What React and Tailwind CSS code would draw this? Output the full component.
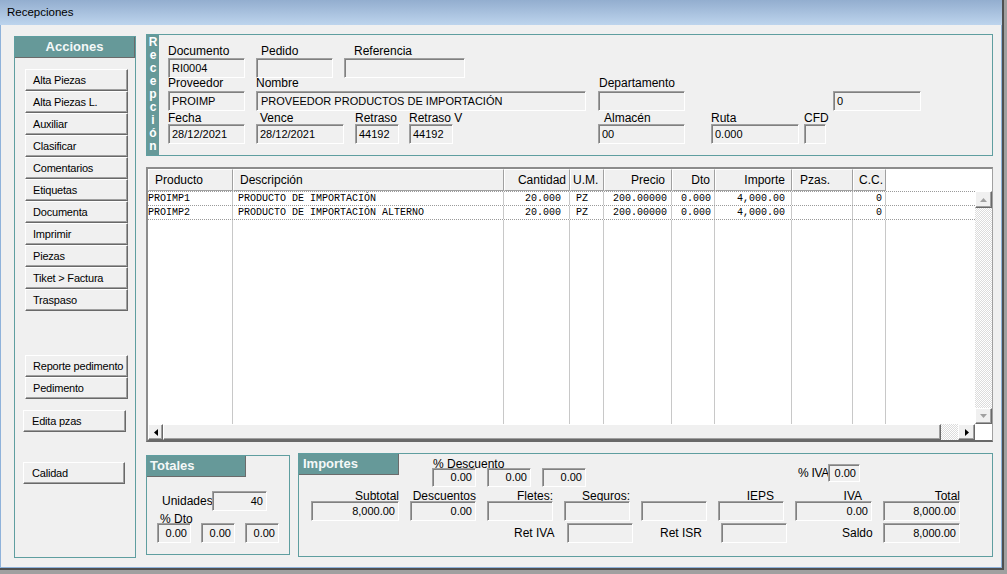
import React from "react";

const sunk =
  "border-t border-l border-t-[#a0a0a0] border-l-[#a0a0a0] border-r border-b border-r-white border-b-white shadow-[inset_1px_1px_0_#808080] bg-[#f0f0f0]";
const raised =
  "bg-[#f0f0f0] border-t border-l border-t-white border-l-white border-r border-b border-r-[#696969] border-b-[#696969] shadow-[inset_-1px_-1px_0_#a0a0a0]";
const checker =
  "bg-[repeating-conic-gradient(#ffffff_0_25%,#dcdcdc_0_50%)] bg-[length:2px_2px]";

function Box({ className = "", right = false, children }) {
  return (
    <div
      className={`${sunk} flex items-center text-[11px] whitespace-nowrap overflow-hidden ${
        right ? "justify-end pr-[3px]" : "pl-[3px]"
      } ${className}`}
    >
      {children}
    </div>
  );
}

function TealHeader({ className = "", children }) {
  return (
    <div
      className={`bg-[#669999] border-r border-b border-[#6b6b6b] text-[#f4f8f8] font-bold text-[13px] flex items-center shrink-0 ${className}`}
    >
      {children}
    </div>
  );
}

function Btn({ className = "", children }) {
  return (
    <div
      className={`${raised} flex items-center h-[22px] text-[11px] tracking-[-0.2px] whitespace-nowrap ${className}`}
    >
      {children}
    </div>
  );
}

const cols = [
  { w: "w-[85px]", h: "Producto", ha: "pl-[6px]", da: "pl-0" },
  { w: "w-[271px]", h: "Descripción", ha: "pl-[6px]", da: "pl-[5px]" },
  { w: "w-[66px]", h: "Cantidad", ha: "justify-end pr-[3px]", da: "justify-end pr-[8px]" },
  { w: "w-[34px]", h: "U.M.", ha: "pl-[2px]", da: "pl-[6px]" },
  { w: "w-[68px]", h: "Precio", ha: "justify-end pr-[6px]", da: "justify-end pr-[4px]" },
  { w: "w-[43px]", h: "Dto", ha: "justify-end pr-[4px]", da: "justify-end pr-[3px]" },
  { w: "w-[77px]", h: "Importe", ha: "justify-end pr-[6px]", da: "justify-end pr-[6px]" },
  { w: "w-[61px]", h: "Pzas.", ha: "pl-[7px]", da: "pl-[2px]" },
  { w: "w-[33px]", h: "C.C.", ha: "justify-end pr-[2px]", da: "justify-end pr-[3px]" },
];

const rows = [
  ["PROIMP1", "PRODUCTO DE IMPORTACIÓN", "20.000", "PZ", "200.00000", "0.000", "4,000.00", "", "0"],
  ["PROIMP2", "PRODUCTO DE IMPORTACIÓN ALTERNO", "20.000", "PZ", "200.00000", "0.000", "4,000.00", "", "0"],
];

const acciones = [
  "Alta Piezas",
  "Alta Piezas L.",
  "Auxiliar",
  "Clasificar",
  "Comentarios",
  "Etiquetas",
  "Documenta",
  "Imprimir",
  "Piezas",
  "Tiket > Factura",
  "Traspaso",
];

function LeftPanel() {
  return (
    <div className="mt-[2px] w-[122px] h-[522px] border border-[#5f9ea0] flex flex-col shrink-0">
      <TealHeader className="h-[21px] justify-center">Acciones</TealHeader>
      <div className="ml-[10px] mt-[11px] w-[103px] flex flex-col">
        {acciones.map((a) => (
          <Btn key={a} className="pl-[7px]">
            {a}
          </Btn>
        ))}
      </div>
      <div className="ml-[10px] mt-[44px] w-[103px] flex flex-col">
        <Btn className="pl-[7px]">Reporte pedimento</Btn>
        <Btn className="pl-[7px]">Pedimento</Btn>
      </div>
      <div className="ml-[8px] mt-[11px] w-[103px]">
        <Btn className="pl-[8px]">Edita pzas</Btn>
      </div>
      <div className="ml-[8px] mt-[30px] w-[102px]">
        <Btn className="pl-[8px]">Calidad</Btn>
      </div>
    </div>
  );
}

function HeaderPanel() {
  const letters = ["R", "e", "c", "e", "p", "c", "i", "ó", "n"];
  const lA = "h-[16px] leading-[18px] text-[12px] whitespace-nowrap";
  const lB = "h-[13px] leading-[11px] text-[12px] whitespace-nowrap";
  const lC = "h-[13px] leading-[15px] text-[12px] whitespace-nowrap";
  return (
    <div className="h-[122px] border border-[#5f9ea0] flex">
      <div className="w-[12px] bg-[#669999] flex flex-col items-center pt-[1px] text-white font-bold text-[12px] leading-[13px]">
        {letters.map((l, i) => (
          <span key={i}>{l}</span>
        ))}
      </div>
      <div className="flex flex-col pl-[9px] pt-[7px]">
        {/* Row A */}
        <div className="flex">
          <div className="w-[77px] flex flex-col">
            <div className={lA}>Documento</div>
            <Box className="h-[20px]">RI0004</Box>
          </div>
          <div className="w-[77px] ml-[11px] flex flex-col">
            <div className={`${lA} pl-[5px]`}>Pedido</div>
            <Box className="h-[20px]" />
          </div>
          <div className="w-[121px] ml-[11px] flex flex-col">
            <div className={`${lA} pl-[10px]`}>Referencia</div>
            <Box className="h-[20px]" />
          </div>
        </div>
        {/* Row B */}
        <div className="flex">
          <div className="w-[77px] flex flex-col">
            <div className={lB}>Proveedor</div>
            <Box className="h-[20px]">PROIMP</Box>
          </div>
          <div className="w-[330px] ml-[11px] flex flex-col">
            <div className={lB}>Nombre</div>
            <Box className="h-[20px] pl-[4px]">PROVEEDOR PRODUCTOS DE IMPORTACIÓN</Box>
          </div>
          <div className="w-[87px] ml-[12px] flex flex-col">
            <div className={`${lB} pl-[1px]`}>Departamento</div>
            <Box className="h-[20px]" />
          </div>
          <div className="w-[88px] ml-[148px] flex flex-col">
            <div className={lB}></div>
            <Box className="h-[20px]">0</Box>
          </div>
        </div>
        {/* Row C */}
        <div className="flex">
          <div className="w-[77px] flex flex-col">
            <div className={lC}>Fecha</div>
            <Box className="h-[20px]">28/12/2021</Box>
          </div>
          <div className="w-[88px] ml-[11px] flex flex-col">
            <div className={`${lC} pl-[4px]`}>Vence</div>
            <Box className="h-[20px]">28/12/2021</Box>
          </div>
          <div className="w-[44px] ml-[11px] flex flex-col">
            <div className={lC}>Retraso</div>
            <Box className="h-[20px]">44192</Box>
          </div>
          <div className="w-[44px] ml-[10px] flex flex-col">
            <div className={lC}>Retraso V</div>
            <Box className="h-[20px]">44192</Box>
          </div>
          <div className="w-[87px] ml-[145px] flex flex-col">
            <div className={`${lC} pl-[6px]`}>Almacén</div>
            <Box className="h-[20px]">00</Box>
          </div>
          <div className="w-[88px] ml-[26px] flex flex-col">
            <div className={lC}>Ruta</div>
            <Box className="h-[20px]">0.000</Box>
          </div>
          <div className="w-[22px] ml-[5px] flex flex-col">
            <div className={lC}>CFD</div>
            <Box className="h-[20px] relative" />
          </div>
        </div>
      </div>
    </div>
  );
}

function Tri({ dir, color }) {
  if (dir === "up")
    return (
      <svg width="7" height="4" viewBox="0 0 7 4">
        <polygon points="0,4 3.5,0 7,4" fill={color} />
      </svg>
    );
  if (dir === "down")
    return (
      <svg width="7" height="4" viewBox="0 0 7 4">
        <polygon points="0,0 3.5,4 7,0" fill={color} />
      </svg>
    );
  if (dir === "left")
    return (
      <svg width="4" height="7" viewBox="0 0 4 7">
        <polygon points="4,0 0,3.5 4,7" fill={color} />
      </svg>
    );
  return (
    <svg width="4" height="7" viewBox="0 0 4 7">
      <polygon points="0,0 4,3.5 0,7" fill={color} />
    </svg>
  );
}

function Grid() {
  return (
    <div className="mt-[11px] h-[275px] flex flex-col bg-white border-l-2 border-t-2 border-l-[#8c8c8c] border-t-[#8c8c8c] border-r border-r-[#a0a0a0] border-b-2 border-b-[#696969]">
      {/* header */}
      <div className="flex h-[22px] shrink-0">
        {cols.map((c) => (
          <div
            key={c.h}
            className={`${c.w} ${c.ha} shrink-0 flex items-center bg-[#f0f0f0] border-t border-l border-t-white border-l-white border-r border-b border-r-[#a0a0a0] border-b-[#a0a0a0] text-[12px] whitespace-nowrap`}
          >
            {c.h}
          </div>
        ))}
        <div className="flex-1 bg-white" />
      </div>
      {/* body */}
      <div className="flex flex-1 min-h-0">
        <div className="flex-1 flex flex-col font-['Liberation_Mono',monospace] text-[10px]">
          {rows.map((r, ri) => (
            <div key={ri} className="flex h-[14px] shrink-0 border-t border-dotted border-[#9a9a9a]">
              {cols.map((c, ci) => (
                <div
                  key={ci}
                  className={`${c.w} ${c.da} shrink-0 flex items-center border-r border-r-[#c8c8c8] whitespace-nowrap overflow-hidden`}
                >
                  {r[ci]}
                </div>
              ))}
              <div className="flex-1" />
            </div>
          ))}
          <div className="flex flex-1 border-t border-dotted border-[#9a9a9a]">
            {cols.map((c, ci) => (
              <div key={ci} className={`${c.w} shrink-0 border-r border-r-[#c8c8c8]`} />
            ))}
            <div className="flex-1" />
          </div>
        </div>
        <div className="w-[17px] flex flex-col shrink-0">
          <div className={`${raised} h-[17px] flex items-center justify-center`}>
            <Tri dir="up" color="#a0a0a0" />
          </div>
          <div className={`flex-1 ${checker}`} />
          <div className={`${raised} h-[16px] flex items-center justify-center`}>
            <Tri dir="down" color="#a0a0a0" />
          </div>
        </div>
      </div>
      {/* hscroll */}
      <div className="flex h-[16px] shrink-0 bg-[#f0f0f0]">
        <div className={`${raised} w-[15px] flex items-center justify-center`}>
          <Tri dir="left" color="#000000" />
        </div>
        <div className={`${raised} w-[778px]`} />
        <div className={`w-[17px] ${checker}`} />
        <div className={`${raised} w-[17px] flex items-center justify-center`}>
          <Tri dir="right" color="#000000" />
        </div>
        <div className="flex-1 bg-white" />
      </div>
    </div>
  );
}

function Totales() {
  return (
    <div className="mt-[2px] w-[144px] h-[100px] border border-[#5f9ea0] flex flex-col shrink-0">
      <TealHeader className="w-[99px] h-[21px] pl-[3px]">Totales</TealHeader>
      <div className="flex items-center mt-[14px]">
        <div className="ml-[15px] w-[50px] text-[12px] whitespace-nowrap">Unidades</div>
        <Box className="w-[55px] h-[20px]" right>
          40
        </Box>
      </div>
      <div className="ml-[13px] h-[12px] leading-[16px] text-[12px] whitespace-nowrap">% Dto</div>
      <div className="flex ml-[10px] gap-[10px]">
        <Box className="w-[34px] h-[20px] relative" right>
          0.00
        </Box>
        <Box className="w-[34px] h-[20px] relative" right>
          0.00
        </Box>
        <Box className="w-[34px] h-[20px] relative" right>
          0.00
        </Box>
      </div>
    </div>
  );
}

function LField({ w, ml, label, lcls = "", value }) {
  return (
    <div className={`${w} ${ml} flex flex-col shrink-0`}>
      <div className={`h-[11px] leading-[12px] text-[12px] text-right whitespace-nowrap ${lcls}`}>{label}</div>
      <Box className="h-[20px] relative" right>
        {value}
      </Box>
    </div>
  );
}

function Importes() {
  return (
    <div className="ml-[8px] flex-1 h-[104px] border border-[#5f9ea0] flex flex-col">
      <div className="flex items-start h-[36px] shrink-0">
        <TealHeader className="w-[100px] h-[21px] pl-[4px]">Importes</TealHeader>
        <div className="ml-[33px] flex flex-col">
          <div className="h-[14px] leading-[21px] text-[12px] pl-[1px] whitespace-nowrap">% Descuento</div>
          <div className="flex gap-[11px]">
            <Box className="w-[44px] h-[19px] relative" right>
              0.00
            </Box>
            <Box className="w-[44px] h-[19px] relative" right>
              0.00
            </Box>
            <Box className="w-[44px] h-[19px] relative" right>
              0.00
            </Box>
          </div>
        </div>
        <div className="ml-[212px] mt-[10px] flex items-center">
          <div className="w-[30px] text-[12px] whitespace-nowrap tracking-[-0.3px]">% IVA</div>
          <Box className="w-[32px] h-[18px]" right>
            0.00
          </Box>
        </div>
      </div>
      <div className="flex">
        <LField w="w-[88px]" ml="ml-[12px]" label="Subtotal" value="8,000.00" />
        <LField w="w-[66px]" ml="ml-[11px]" label="Descuentos" value="0.00" />
        <LField w="w-[66px]" ml="ml-[11px]" label="Fletes:" value="" />
        <LField w="w-[66px]" ml="ml-[11px]" label="Seguros:" value="" />
        <LField w="w-[66px]" ml="ml-[11px]" label="" value="" />
        <LField w="w-[66px]" ml="ml-[11px]" label="IEPS" lcls="pr-[10px]" value="" />
        <LField w="w-[77px]" ml="ml-[11px]" label="IVA" lcls="pr-[10px]" value="0.00" />
        <LField w="w-[77px]" ml="ml-[11px]" label="Total" value="8,000.00" />
      </div>
      <div className="flex items-center mt-[2px]">
        <div className="ml-[215px] w-[53px] text-[12px] whitespace-nowrap">Ret IVA</div>
        <Box className="w-[66px] h-[20px]" />
        <div className="ml-[27px] w-[61px] text-[12px] whitespace-nowrap">Ret ISR</div>
        <Box className="w-[66px] h-[20px]" />
        <div className="ml-[55px] w-[41px] text-[12px] whitespace-nowrap">Saldo</div>
        <Box className="w-[77px] h-[20px]" right>
          8,000.00
        </Box>
      </div>
    </div>
  );
}

export default function App() {
  return (
    <div className="w-[1007px] h-[574px] bg-[#a0a0a0] overflow-hidden font-['Liberation_Sans',Arial,sans-serif] text-black">
      <div className="w-[1004px] h-[570px] flex flex-col bg-[#f0f0f0] border-r-2 border-b-2 border-[#505050]">
        <div className="h-[25px] shrink-0 bg-linear-to-b from-[#93aecf] to-[#bdd4ed] flex items-center pl-[7px] text-[11.5px]">
          Recepciones
        </div>
        <div className="flex-1 flex items-start pt-[9px] pl-[13px] border-l border-r border-b border-[#8fb2da]">
          <LeftPanel />
          <div className="ml-[10px] w-[847px] flex flex-col shrink-0">
            <HeaderPanel />
            <Grid />
            <div className="flex items-start mt-[11px]">
              <Totales />
              <Importes />
            </div>
          </div>
        </div>
      </div>
    </div>
  );
}
